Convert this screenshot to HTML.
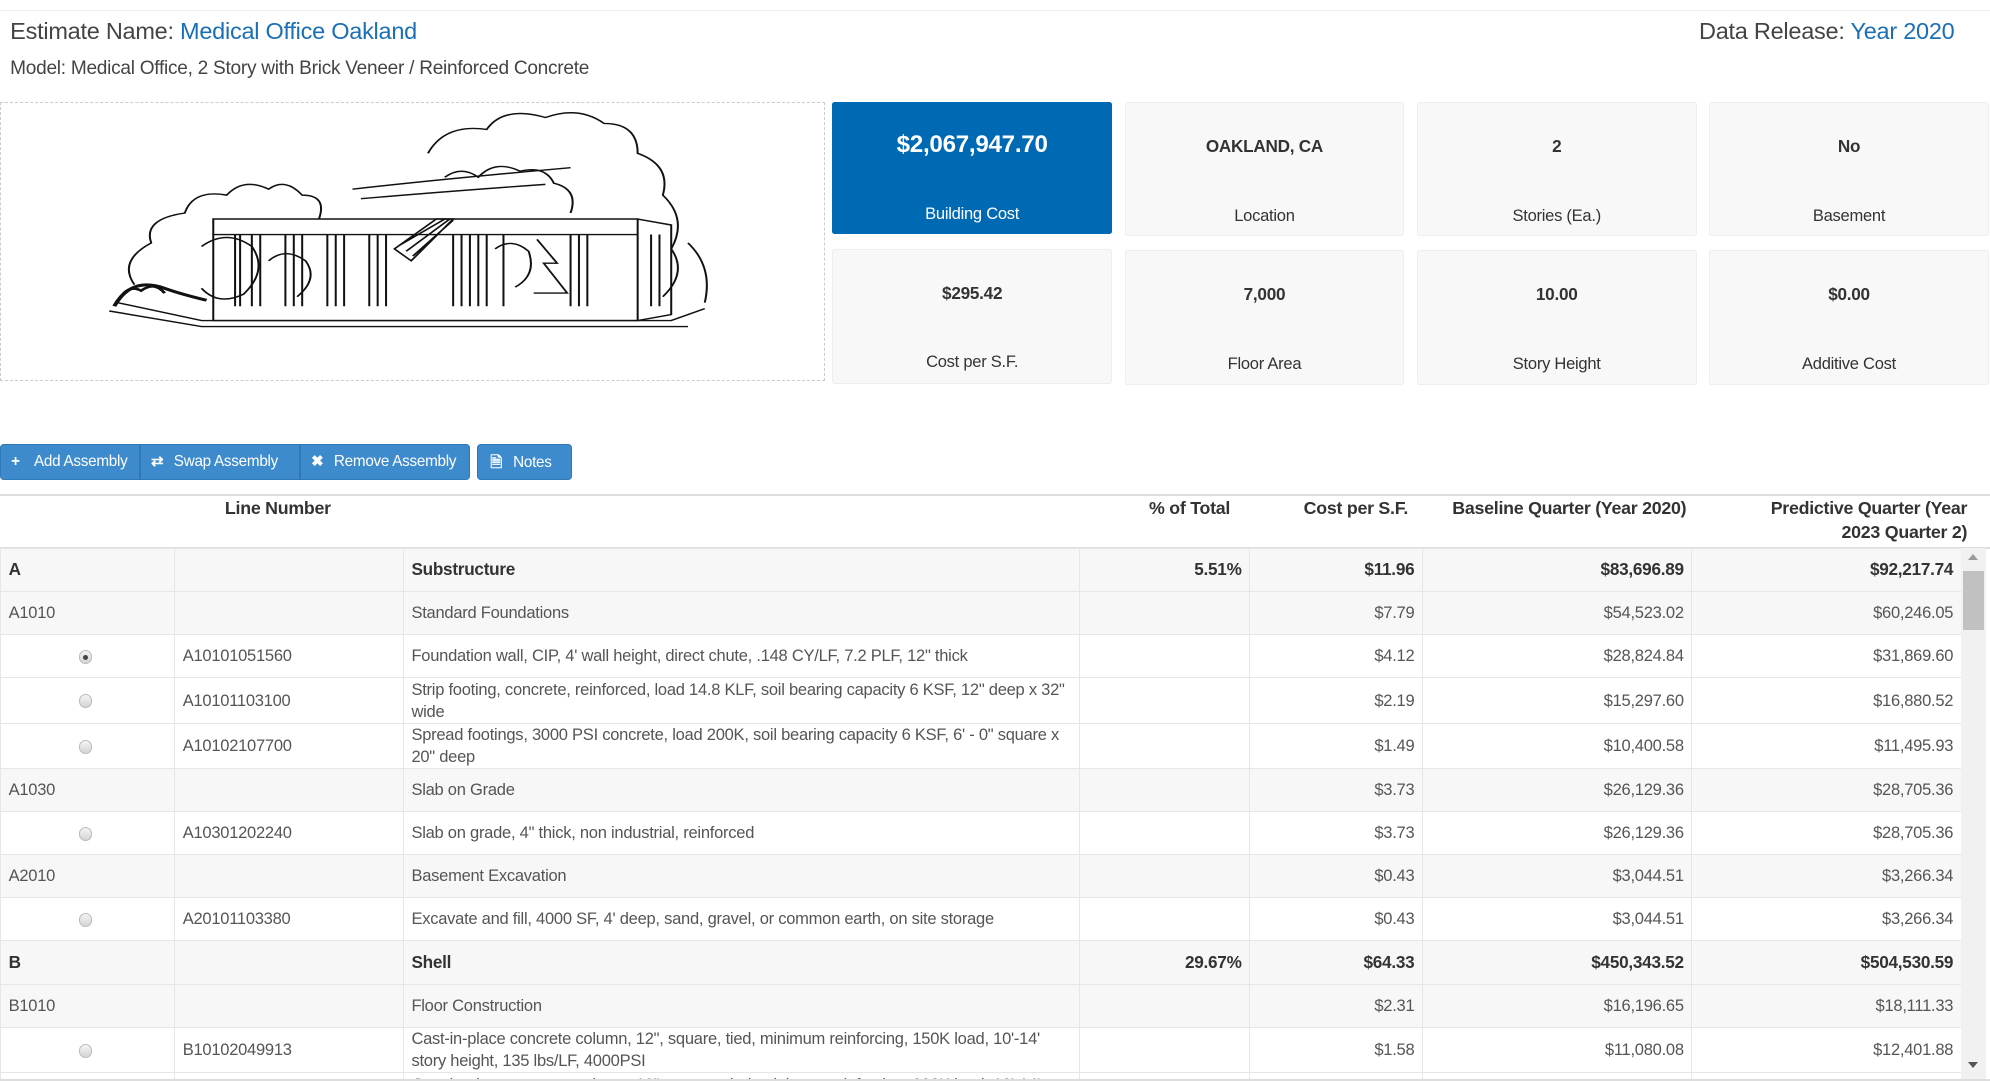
<!DOCTYPE html>
<html><head><meta charset="utf-8"><style>
html,body{margin:0;padding:0;background:#fff;width:1990px;height:1081px;overflow:hidden}
#w{zoom:1.2708;width:1566px;height:851px;position:relative;font-family:"Liberation Sans",sans-serif;color:#555;letter-spacing:-0.2px}
.abs{position:absolute}
.topline{left:0;top:8px;width:1566px;border-top:1px solid #eee}
.title{left:8px;top:14px;font-size:18.5px;color:#444}
.blue{color:#1a6fb5}
.model{left:8px;top:46px;font-size:15px;color:#444}
.imgbox{left:0;top:80px;width:649px;height:220px;border:1px dashed #ccc;box-sizing:border-box}
.card{width:220px;background:#f8f8f8;border:1px solid #eee;box-sizing:border-box;border-radius:2px;text-align:center;color:#333}
.card .v{position:absolute;left:0;right:0;font-weight:bold;font-size:13.5px}
.card .l{position:absolute;left:0;right:0;font-size:13px}
.card.b{background:#0069b4;border-color:#0069b4;color:#fff}
.btn{top:349px;height:29px;background:#3d8bcd;border:1px solid #2f79b9;box-sizing:border-box;color:#fff;font-size:12px;line-height:27px;padding-left:8px}
.btn span{display:inline-block;width:18px;font-weight:bold}
.hdr{left:0;top:389px;width:1566px;height:40px;border-top:2px solid #ddd;border-bottom:2px solid #ddd;font-weight:bold;font-size:14px;color:#333}
.hdr div{position:absolute;top:0px;line-height:19px}
.body{left:0;top:431px;width:1543px;height:419px;overflow:hidden}
table{border-collapse:collapse;table-layout:fixed;width:1543px;font-size:13px}
td{border:1px solid #e6e6e6;padding:0 6px;vertical-align:middle;line-height:17px;color:#555}
tr.g td{background:#f7f7f7}
tr.t td{font-weight:bold;color:#333;font-size:13.5px}
td.r{text-align:right}
.rad{display:inline-block;width:11px;height:11px;border-radius:50%;background:linear-gradient(#f4f4f4,#d4d4d4);border:1px solid #bbb;box-sizing:border-box;position:relative;left:55px;top:2px}
.rad.on::after{content:"";position:absolute;left:3px;top:3px;width:4px;height:4px;border-radius:50%;background:#444}
.sb{left:1543px;top:431px;width:20px;height:419px;background:#f1f1f1}
</style></head><body><div id="w">
<div class="abs topline"></div>
<div class="abs title">Estimate Name: <span class="blue">Medical Office Oakland</span></div>
<div class="abs title" style="left:auto;right:28px">Data Release: <span class="blue">Year 2020</span></div>
<div class="abs model">Model: Medical Office, 2 Story with Brick Veneer / Reinforced Concrete</div>
<div class="abs imgbox">
<svg width="647" height="218" viewBox="0 0 647 218" fill="none" stroke="#111" stroke-width="1.2">
<g transform="translate(-27,2) scale(1.32,0.94)">
<path d="M100 150 q-10-20 10-35 q-5-20 20-25 q5-20 25-15 q10-15 25-5 q10-10 20 5 q15 0 10 20"/>
<path d="M275 40 q10-25 35-20 q10-20 35-10 q20-10 35 5 q20 0 20 25 q20 10 15 35 q15 20 5 45 q10 20-5 40"/>
<path d="M285 60 q10-10 20 0 q10-15 25-5 q15-5 20 10 q15 5 10 25"/>
<path d="M230 70 q50-8 130-18"/><path d="M235 78 q50-6 110-12"/>
<path d="M147 95 H400 V180 H147 Z"/><path d="M147 108 H400"/>
<path d="M400 95 L420 100 V175 L400 180"/>
<path d="M160 108 V168 M163 108 V168 M170 108 V168 M175 108 V168 M190 108 V168 M195 108 V168 M200 108 V168 M215 108 V168 M220 108 V168 M225 108 V168 M240 108 V168 M245 108 V168 M250 108 V168"/>
<path d="M290 108 V168 M295 108 V168 M300 108 V168 M305 108 V168 M310 108 V168 M320 108 V168 M360 108 V168 M365 108 V168 M370 108 V168 M408 108 V168 M413 108 V168"/>
<path d="M255 120 L280 95 L290 95 L265 130 Z M258 117 L285 95 M262 122 L288 95 M266 126 L290 96"/>
<path d="M90 165 L140 180 H420 L440 170"/><path d="M85 172 L140 185 H430"/>
<path d="M88 168 q10-25 30-15 q10 5 25 10" stroke-width="2.5"/>
<path d="M92 160 q5-10 12-5 q8-8 14 2" stroke-width="2"/>
<path d="M140 118 q15-15 30 0 q10 20-5 40 q-15 10-25-5"/><path d="M340 112 l12 20 l-8 0 l14 25 l-20 0"/>
<path d="M430 115 q15 20 10 50"/>
<path d="M180 130 q10-12 22 0 q8 15-5 30"/><path d="M315 120 q10-10 20 2 q5 20-8 30"/>
</g>
</svg>
</div>
<div class="abs card b" style="left:655px;top:80px;height:104px"><div class="v" style="top:22px;font-size:19px">$2,067,947.70</div><div class="l" style="top:80px">Building Cost</div></div>
<div class="abs card" style="left:885px;top:80px;height:106px"><div class="v" style="top:26px">OAKLAND, CA</div><div class="l" style="top:81px">Location</div></div>
<div class="abs card" style="left:1115px;top:80px;height:106px"><div class="v" style="top:26px">2</div><div class="l" style="top:81px">Stories (Ea.)</div></div>
<div class="abs card" style="left:1345px;top:80px;height:106px"><div class="v" style="top:26px">No</div><div class="l" style="top:81px">Basement</div></div>
<div class="abs card" style="left:655px;top:196px;height:106px"><div class="v" style="top:26px">$295.42</div><div class="l" style="top:80px">Cost per S.F.</div></div>
<div class="abs card" style="left:885px;top:197px;height:106px"><div class="v" style="top:26px">7,000</div><div class="l" style="top:81px">Floor Area</div></div>
<div class="abs card" style="left:1115px;top:197px;height:106px"><div class="v" style="top:26px">10.00</div><div class="l" style="top:81px">Story Height</div></div>
<div class="abs card" style="left:1345px;top:197px;height:106px"><div class="v" style="top:26px">$0.00</div><div class="l" style="top:81px">Additive Cost</div></div>

<div class="abs btn" style="left:0;width:110px;border-radius:3px 0 0 3px"><span>+</span>Add Assembly</div>
<div class="abs btn" style="left:110px;width:126px"><span>⇄</span>Swap Assembly</div>
<div class="abs btn" style="left:236px;width:134px;border-radius:0 3px 3px 0"><span>✖</span>Remove Assembly</div>
<div class="abs btn" style="left:375px;width:75px;border-radius:3px;padding-left:10px;line-height:29px"><span>🗎</span>Notes</div>

<div class="abs hdr">
<div style="left:177px">Line Number</div>
<div style="right:598px">% of Total</div>
<div style="right:458px">Cost per S.F.</div>
<div style="right:239px">Baseline Quarter (Year 2020)</div>
<div style="right:18px;text-align:right">Predictive Quarter (Year<br>2023 Quarter 2)</div>
</div>

<div class="abs body"><table>
<colgroup><col style="width:137px"><col style="width:180px"><col style="width:532px"><col style="width:134px"><col style="width:136px"><col style="width:212px"><col style="width:212px"></colgroup>
<tr class="g t" style="height:34px"><td>A</td><td></td><td>Substructure</td><td class="r">5.51%</td><td class="r">$11.96</td><td class="r">$83,696.89</td><td class="r">$92,217.74</td></tr>
<tr class="g" style="height:34px"><td>A1010</td><td></td><td>Standard Foundations</td><td></td><td class="r">$7.79</td><td class="r">$54,523.02</td><td class="r">$60,246.05</td></tr>
<tr style="height:34px"><td><span class="rad on"></span></td><td>A10101051560</td><td>Foundation wall, CIP, 4' wall height, direct chute, .148 CY/LF, 7.2 PLF, 12" thick</td><td></td><td class="r">$4.12</td><td class="r">$28,824.84</td><td class="r">$31,869.60</td></tr>
<tr style="height:36px"><td><span class="rad"></span></td><td>A10101103100</td><td>Strip footing, concrete, reinforced, load 14.8 KLF, soil bearing capacity 6 KSF, 12" deep x 32" wide</td><td></td><td class="r">$2.19</td><td class="r">$15,297.60</td><td class="r">$16,880.52</td></tr>
<tr style="height:35px"><td><span class="rad"></span></td><td>A10102107700</td><td>Spread footings, 3000 PSI concrete, load 200K, soil bearing capacity 6 KSF, 6' - 0" square x 20" deep</td><td></td><td class="r">$1.49</td><td class="r">$10,400.58</td><td class="r">$11,495.93</td></tr>
<tr class="g" style="height:34px"><td>A1030</td><td></td><td>Slab on Grade</td><td></td><td class="r">$3.73</td><td class="r">$26,129.36</td><td class="r">$28,705.36</td></tr>
<tr style="height:34px"><td><span class="rad"></span></td><td>A10301202240</td><td>Slab on grade, 4" thick, non industrial, reinforced</td><td></td><td class="r">$3.73</td><td class="r">$26,129.36</td><td class="r">$28,705.36</td></tr>
<tr class="g" style="height:34px"><td>A2010</td><td></td><td>Basement Excavation</td><td></td><td class="r">$0.43</td><td class="r">$3,044.51</td><td class="r">$3,266.34</td></tr>
<tr style="height:34px"><td><span class="rad"></span></td><td>A20101103380</td><td>Excavate and fill, 4000 SF, 4' deep, sand, gravel, or common earth, on site storage</td><td></td><td class="r">$0.43</td><td class="r">$3,044.51</td><td class="r">$3,266.34</td></tr>
<tr class="g t" style="height:34px"><td>B</td><td></td><td>Shell</td><td class="r">29.67%</td><td class="r">$64.33</td><td class="r">$450,343.52</td><td class="r">$504,530.59</td></tr>
<tr class="g" style="height:34px"><td>B1010</td><td></td><td>Floor Construction</td><td></td><td class="r">$2.31</td><td class="r">$16,196.65</td><td class="r">$18,111.33</td></tr>
<tr style="height:36px"><td><span class="rad"></span></td><td>B10102049913</td><td>Cast-in-place concrete column, 12", square, tied, minimum reinforcing, 150K load, 10'-14' story height, 135 lbs/LF, 4000PSI</td><td></td><td class="r">$1.58</td><td class="r">$11,080.08</td><td class="r">$12,401.88</td></tr>
<tr style="height:36px"><td><span class="rad"></span></td><td>B10102049920</td><td>Cast-in-place concrete column, 12", square, tied, minimum reinforcing, 200K load, 10'-14' story height</td><td></td><td class="r">$0.73</td><td class="r">$5,116.57</td><td class="r">$5,709.45</td></tr>
</table></div>
<div class="abs sb">
<div class="abs" style="left:6px;top:5px;border:4px solid transparent;border-bottom:5px solid #999;border-top:0"></div>
<div class="abs" style="left:2px;top:18px;width:16px;height:47px;background:#c1c1c1"></div>
<div class="abs" style="left:6px;top:405px;border:4px solid transparent;border-top:5px solid #555;border-bottom:0"></div>
</div>
<div class="abs" style="left:0;top:849px;width:1566px;border-top:2px solid #ddd"></div>
</div></body></html>
